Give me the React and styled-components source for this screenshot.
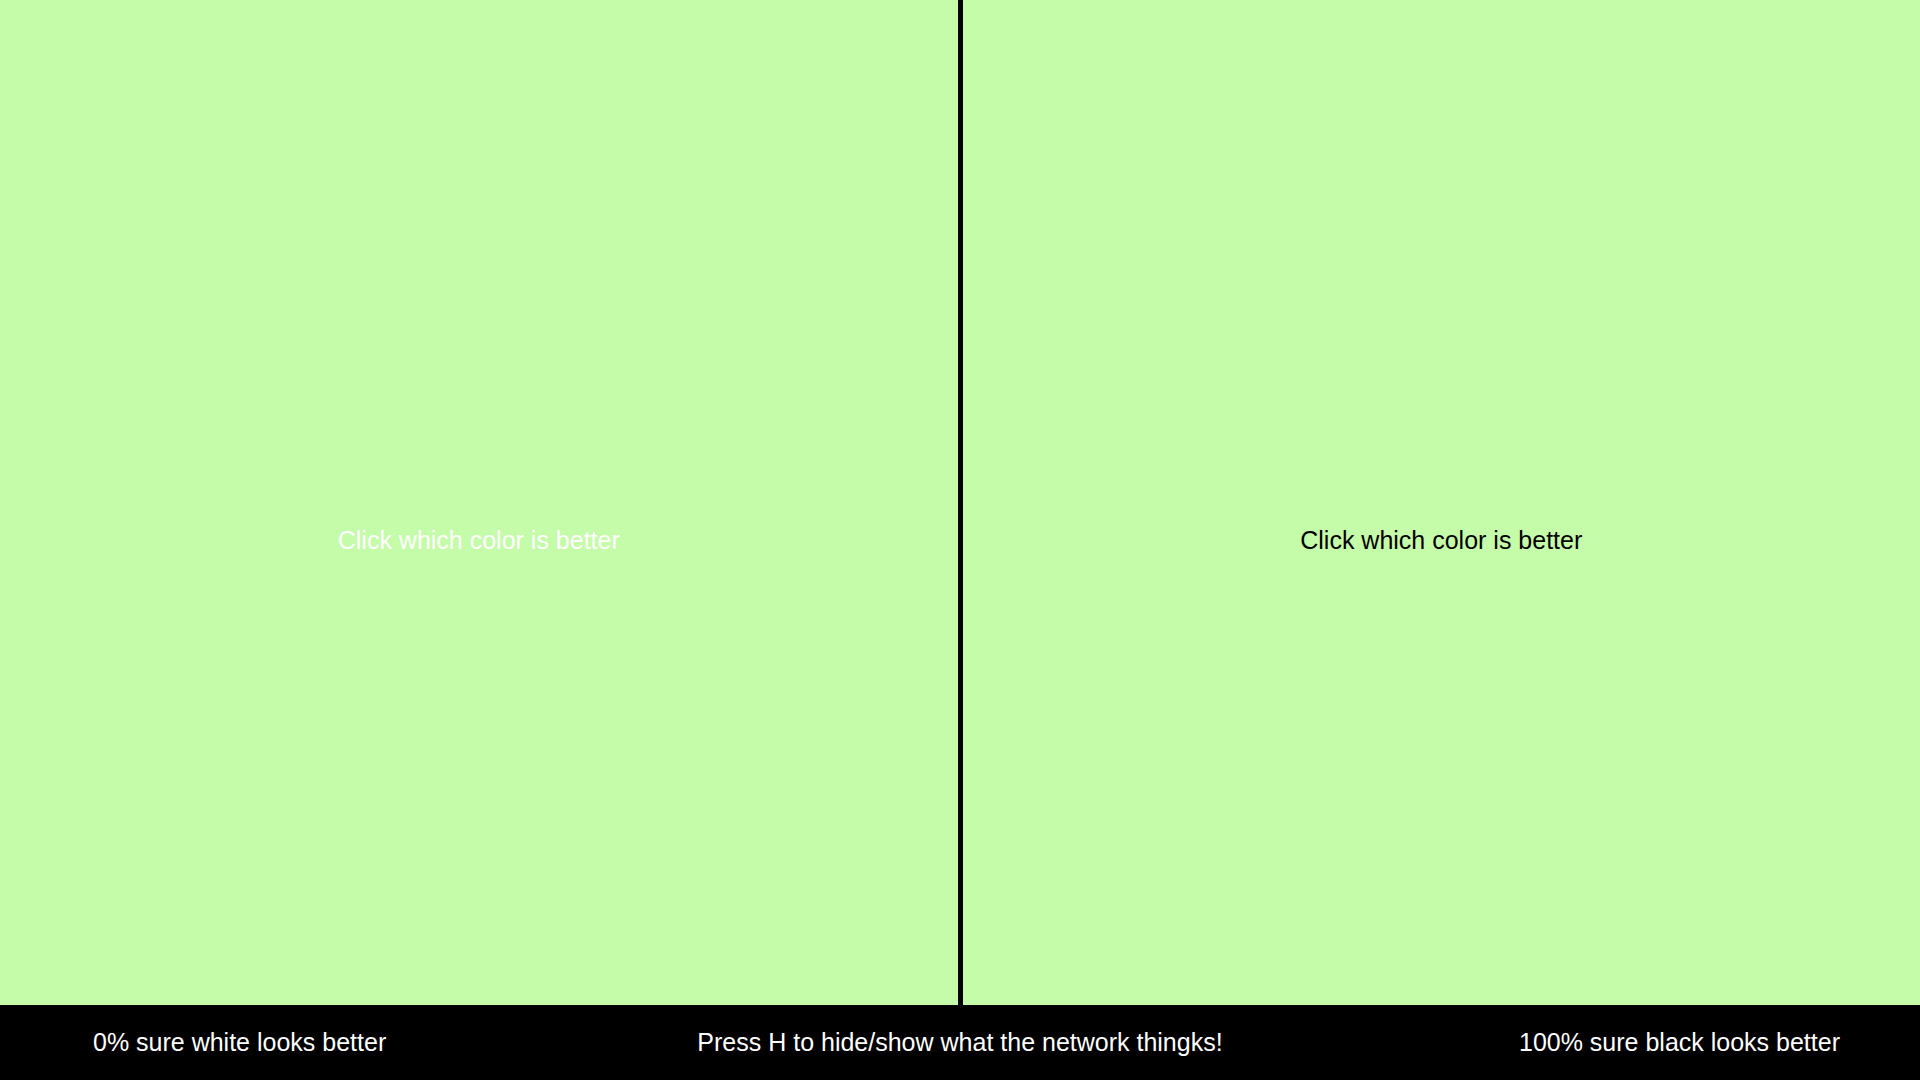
import styled, { createGlobalStyle } from 'styled-components';

const GlobalStyle = createGlobalStyle`
  html, body {
    margin: 0;
    padding: 0;
    height: 100%;
    overflow: hidden;
  }
  body {
    font-family: "Liberation Sans", Arial, sans-serif;
  }
  #root {
    height: 100%;
  }
`;

function App() {
  return (
    <>
      <GlobalStyle />
      <Page>
        <Panels>
          <ColorPanel $textColor="#ffffff">
            <PanelLabel>Click which color is better</PanelLabel>
          </ColorPanel>
          <Divider />
          <ColorPanel $textColor="#000000">
            <PanelLabel>Click which color is better</PanelLabel>
          </ColorPanel>
        </Panels>
        <StatusBar>
          <StatusText $align="start">0% sure white looks better</StatusText>
          <StatusText $align="center">Press H to hide/show what the network thingks!</StatusText>
          <StatusText $align="end">100% sure black looks better</StatusText>
        </StatusBar>
      </Page>
    </>
  );
}

export default App;


const Page = styled.div`
  display: flex;
  flex-direction: column;
  width: 100vw;
  height: 100vh;
  background-color: #c5fca9;
`;

const Panels = styled.div`
  display: flex;
  flex: 1;
  min-height: 0;
`;

const ColorPanel = styled.div`
  display: flex;
  flex: 1;
  align-items: center;
  justify-content: center;
  padding-top: 75px;
  background-color: #c5fca9;
  color: ${props => props.$textColor};
  cursor: pointer;
`;

const PanelLabel = styled.span`
  font-size: 25px;
`;

const Divider = styled.div`
  width: 5px;
  background-color: #000;
`;

const StatusBar = styled.div`
  display: grid;
  grid-template-columns: 1fr auto 1fr;
  align-items: center;
  height: 75px;
  padding: 0 80px;
  background-color: #000;
  box-sizing: border-box;
`;

const StatusText = styled.span`
  justify-self: ${props => props.$align};
  margin-left: ${props => (props.$align === 'start' ? '13px' : '0')};
  color: #fff;
  font-size: 25px;
  white-space: nowrap;
`;
